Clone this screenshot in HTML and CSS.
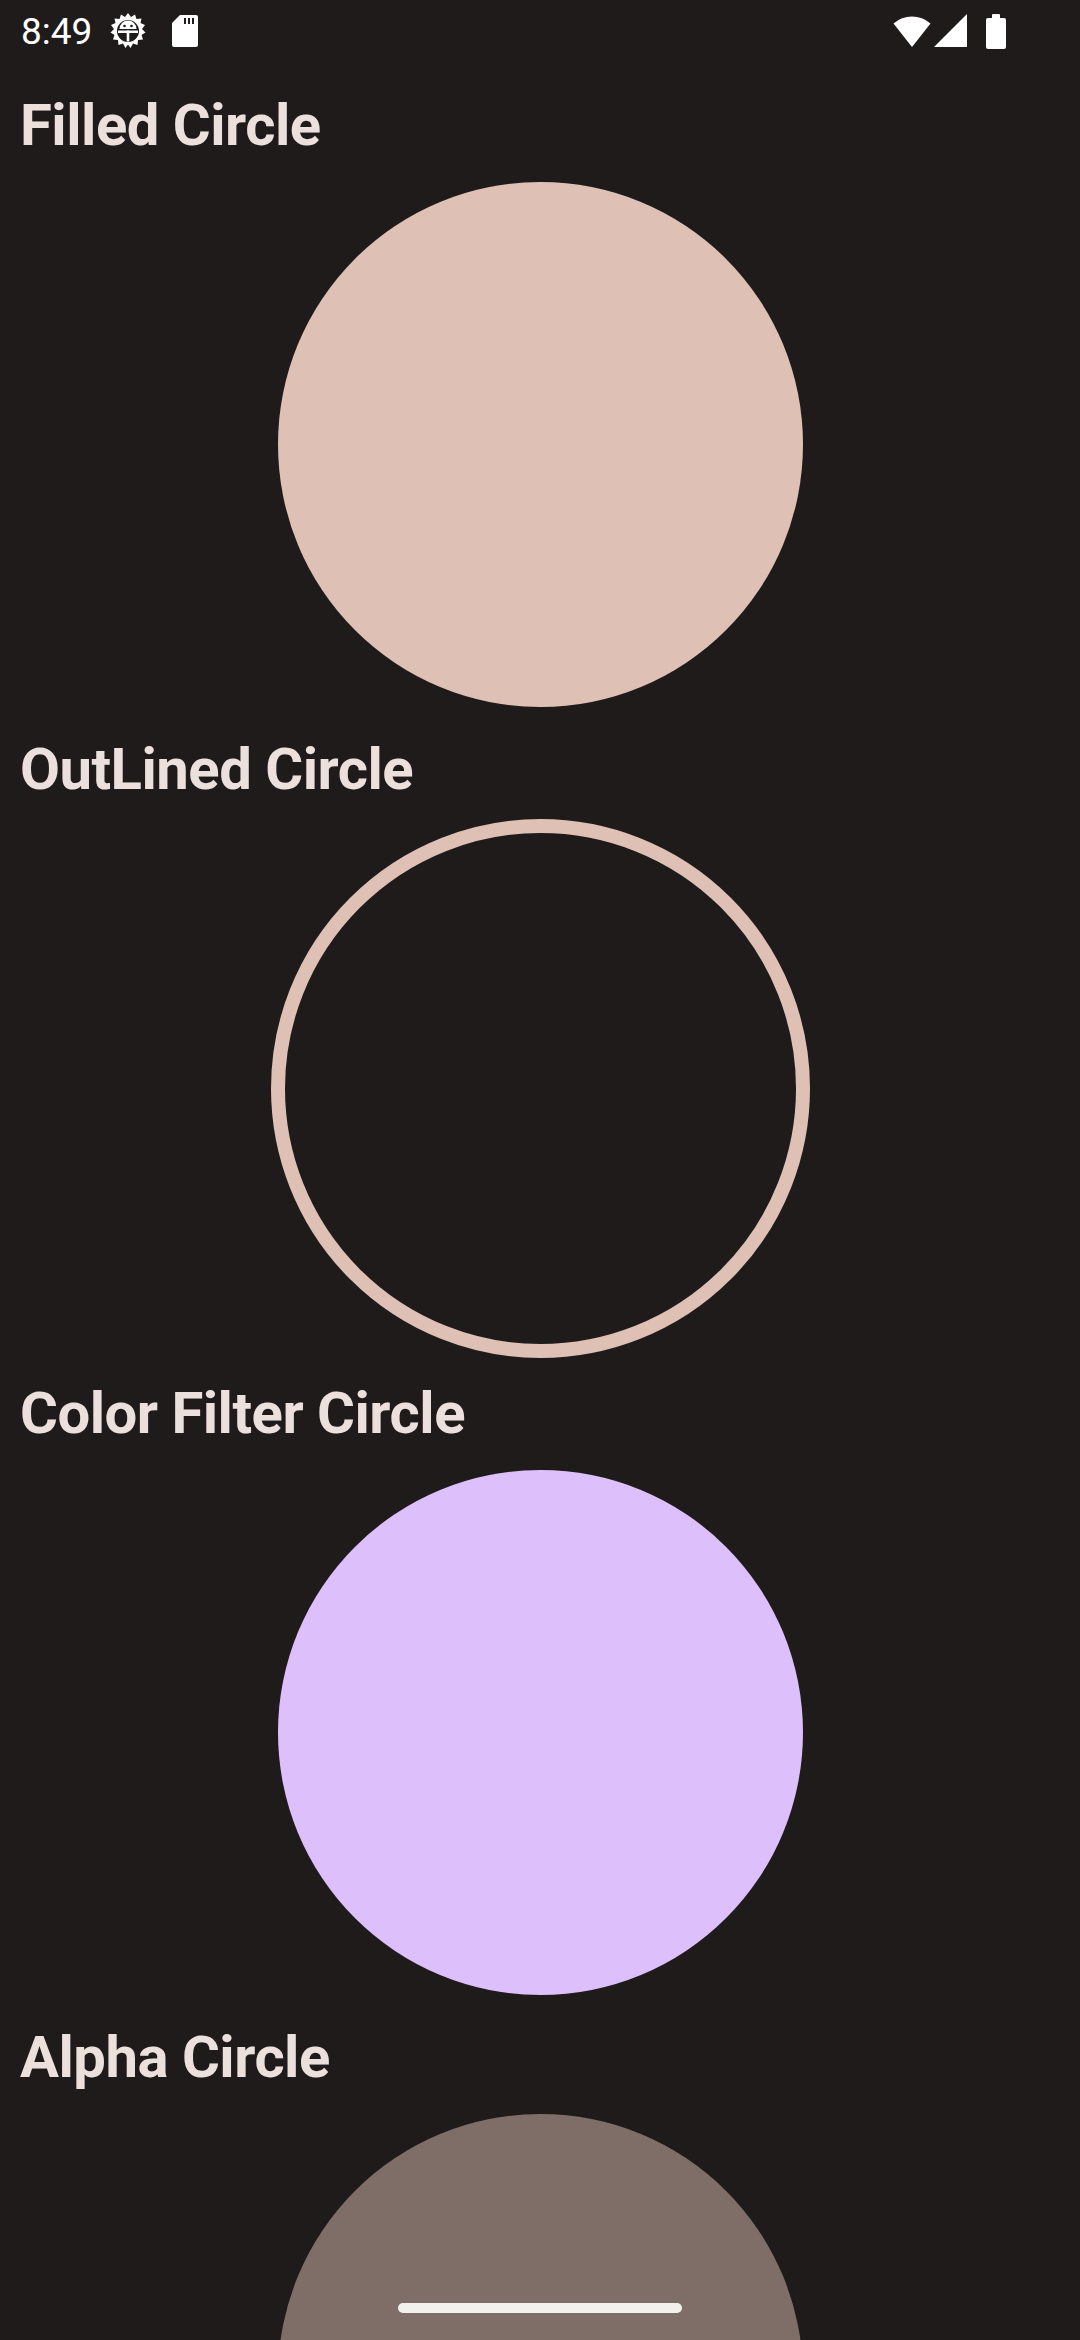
FILE: index.html
```html
<!DOCTYPE html>
<html lang="en">
<head>
    <meta charset="UTF-8">
    <meta name="viewport" content="width=device-width, initial-scale=1.0">
    <title>Circles</title>
    <link rel="stylesheet" href="styles.css">
</head>
<body>
    <div class="status-bar">
        <div class="status-left">
            <span class="time">8:49</span>
            <!-- debug gear -->
            <svg class="icon-gear" width="36" height="36" viewBox="0 0 36 36">
                <path fill="#fff" d="M18 0 L21 4 L25 1.5 L26.5 6 L31.5 5.5 L30.5 10 L35 12 L32 16 L35.5 19.5 L31.5 22 L33 26.5 L28 27 L27.5 32 L23 30.5 L20.5 35 L18 31.5 L15.5 35 L13 30.5 L8.5 32 L8 27 L3 26.5 L4.5 22 L0.5 19.5 L4 16 L1 12 L5.5 10 L4.5 5.5 L9.5 6 L11 1.5 L15 4 Z"/>
                <circle cx="18" cy="18" r="11" fill="#1f1b1b"/>
                <path fill="#fff" d="M9.5 16 A8.5 8.5 0 0 1 26.5 16 Z"/>
                <circle cx="14.5" cy="13" r="1.3" fill="#1f1b1b"/>
                <circle cx="21.5" cy="13" r="1.3" fill="#1f1b1b"/>
                <rect x="8" y="17.5" width="20" height="2.5" fill="#fff"/>
                <rect x="16.7" y="17.5" width="2.6" height="11" fill="#fff"/>
            </svg>
            <!-- sd card -->
            <svg class="icon-sd" width="26" height="32" viewBox="0 0 26 32">
                <path fill="#fff" d="M8 0 H24 Q26 0 26 2 V30 Q26 32 24 32 H2 Q0 32 0 30 V8 Z"/>
                <rect x="12" y="3" width="2" height="6" fill="#1f1b1b"/>
                <rect x="16" y="3" width="2" height="6" fill="#1f1b1b"/>
                <rect x="20" y="3" width="2" height="6" fill="#1f1b1b"/>
            </svg>
        </div>
        <div class="status-right">
            <svg class="icon-wifi" width="40" height="34" viewBox="0 0 40 34">
                <path fill="#fff" d="M20 33 L1.5 9.5 A28 28 0 0 1 38.5 9.5 Z"/>
            </svg>
            <svg class="icon-signal" width="34" height="34" viewBox="0 0 34 34">
                <path fill="#fff" d="M0 33 L33 0 V33 Z"/>
            </svg>
            <svg class="icon-battery" width="20" height="35" viewBox="0 0 20 35">
                <rect x="6" y="0" width="8" height="5" rx="1" fill="#fff"/>
                <rect x="0" y="4" width="20" height="31" rx="2" fill="#fff"/>
            </svg>
        </div>
    </div>

    <main class="content">
        <section class="item">
            <h2 class="item-title">Filled Circle</h2>
            <div class="circle filled"></div>
        </section>

        <section class="item">
            <h2 class="item-title">OutLined Circle</h2>
            <div class="circle outlined"></div>
        </section>

        <section class="item">
            <h2 class="item-title">Color Filter Circle</h2>
            <div class="circle filtered"></div>
        </section>

        <section class="item">
            <h2 class="item-title">Alpha Circle</h2>
            <div class="circle alpha"></div>
        </section>
    </main>

    <div class="home-indicator"></div>
</body>
</html>
```

FILE: styles.css
```css
html, body {
    margin: 0;
    padding: 0;
}

body {
    width: 1080px;
    height: 2340px;
    overflow: hidden;
    background-color: #1f1b1b;
    font-family: Roboto, 'Liberation Sans', sans-serif;
    position: relative;
}

.status-bar {
    height: 63px;
    display: flex;
    justify-content: space-between;
    align-items: flex-start;
    color: #fff;
}

.status-left {
    display: flex;
    align-items: flex-start;
    padding-left: 21px;
}

.time {
    font-size: 37px;
    line-height: 41px;
    margin-top: 11px;
}

.icon-gear {
    margin-left: 18px;
    margin-top: 13px;
}

.icon-sd {
    margin-left: 26px;
    margin-top: 15px;
}

.status-right {
    display: flex;
    align-items: flex-start;
    padding-right: 74px;
    padding-top: 14px;
}

.icon-wifi {
    margin-right: 2px;
}

.icon-signal {
    margin-right: 18px;
}

.content {
    display: flex;
    flex-direction: column;
}

.item {
    display: flex;
    flex-direction: column;
}

.item-title {
    margin: 22px 0 17px 0;
    padding-left: 20px;
    font-size: 58px;
    line-height: 80px;
    font-weight: 700;
    letter-spacing: -0.5px;
    color: #ece0dd;
}

.circle {
    width: 525px;
    height: 525px;
    border-radius: 50%;
    align-self: center;
    flex-shrink: 0;
}

.filled {
    background-color: #dec0b5;
}

/* 14px stroke centred on the 525px circle edge */
.outlined {
    width: 539px;
    height: 539px;
    margin: -7px 0;
    box-sizing: border-box;
    border: 14px solid #dec0b5;
}

.filtered {
    background-color: #ddbffc;
}

.alpha {
    background-color: #7f6e68;
}

.home-indicator {
    position: absolute;
    left: 398px;
    top: 2303px;
    width: 284px;
    height: 10px;
    border-radius: 5px;
    background-color: #f3f1ee;
}
```
